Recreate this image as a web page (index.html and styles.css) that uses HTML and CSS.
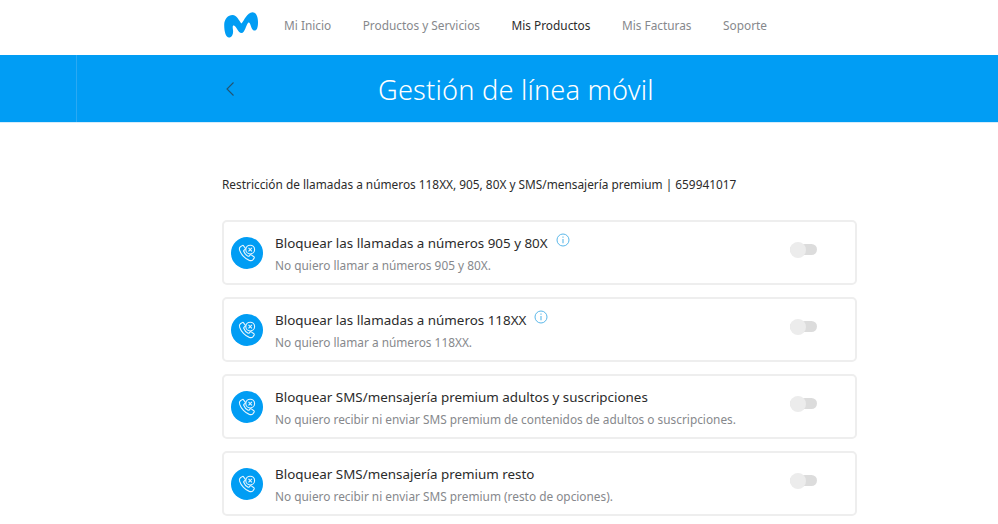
FILE: index.html
```html
<!DOCTYPE html>
<html lang="es">
<head>
<meta charset="utf-8">
<title>Gestión de línea móvil</title>
<link rel="stylesheet" href="styles.css">
</head>
<body>
<svg class="defs" width="0" height="0" aria-hidden="true">
  <symbol id="phone" viewBox="0 0 20 20">
    <path d="M5.200 2.600 3.400 3.700C2.300 4.500 2.200 5.900 2.700 7.400c1.200 3.900 5.700 8.900 9.600 10 1.600.5 3 .2 3.800-.8l1-1.500c.3-.5.2-1-.2-1.300l-2.600-1.900c-.4-.3-.9-.2-1.200.1l-.9 1c-.3.3-.7.4-1.100.2-1.800-.9-3.700-3-4.400-4.900-.1-.4 0-.8.3-1l1-.8c.4-.3.5-.8.3-1.200L6.600 2.900c-.3-.5-.9-.6-1.400-.3Z" fill="none" stroke="currentColor" stroke-width="1.100"/>
    <circle cx="13.200" cy="6.600" r="4.400" fill="none" stroke="currentColor" stroke-width="1.100"/>
    <path d="m11.500 4.900 3.400 3.400m0-3.400-3.400 3.400" fill="none" stroke="currentColor" stroke-width="1.100"/>
  </symbol>
  <symbol id="info" viewBox="0 0 14 14">
    <circle cx="7" cy="7" r="6" fill="none" stroke="currentColor" stroke-width="1"/>
    <path d="M7 6v4.200M7 3.600v1.200" fill="none" stroke="currentColor" stroke-width="1.100"/>
  </symbol>
</svg>
<header class="topbar">
  <svg class="logo" viewBox="0 0 36 26" aria-label="Movistar">
    <path d="M1.200 13C1.200 7 5 3 9.500 3C14 3 16 9 18.500 11.500C21 9 24 .3 29.500 .3C33 .3 35 5 35 10C35 14 34.500 18 32 18.500C29.500 19 28.500 16 27.500 13C27 11 26 10 25 11C23 13 22 21 18.500 21C15 21 14 15 11 13.500C9.500 13 9.500 15 10 18C10.500 22 9 25.500 6 25.500C3 25.500 1.200 20 1.200 13Z" fill="#019df4"/>
  </svg>
  <nav class="menu">
    <a class="menu-item">Mi Inicio</a>
    <a class="menu-item">Productos y Servicios</a>
    <a class="menu-item active">Mis Productos</a>
    <a class="menu-item">Mis Facturas</a>
    <a class="menu-item">Soporte</a>
  </nav>
</header>
<section class="banner">
  <div class="banner-side"></div>
  <svg class="back" viewBox="0 0 10 16" aria-label="Volver"><path d="M8.500 1.500 2 8l6.500 6.500" fill="none" stroke="#24536f" stroke-width="1.100"/></svg>
  <h1 class="title">Gestión de línea móvil</h1>
</section>
<main class="content">
  <p class="intro">Restricción de llamadas a números 118XX, 905, 80X y SMS/mensajería premium | 659941017</p>
  <ul class="cards">
    <li class="card">
      <span class="badge"><svg class="badge-icon"><use href="#phone"/></svg></span>
      <div class="card-text">
        <div class="card-title">Bloquear las llamadas a números 905 y 80X<svg class="info"><use href="#info"/></svg></div>
        <div class="card-sub">No quiero llamar a números 905 y 80X.</div>
      </div>
      <span class="toggle"></span>
    </li>
    <li class="card">
      <span class="badge"><svg class="badge-icon"><use href="#phone"/></svg></span>
      <div class="card-text">
        <div class="card-title">Bloquear las llamadas a números 118XX<svg class="info"><use href="#info"/></svg></div>
        <div class="card-sub">No quiero llamar a números 118XX.</div>
      </div>
      <span class="toggle"></span>
    </li>
    <li class="card">
      <span class="badge"><svg class="badge-icon"><use href="#phone"/></svg></span>
      <div class="card-text">
        <div class="card-title">Bloquear SMS/mensajería premium adultos y suscripciones</div>
        <div class="card-sub">No quiero recibir ni enviar SMS premium de contenidos de adultos o suscripciones.</div>
      </div>
      <span class="toggle"></span>
    </li>
    <li class="card">
      <span class="badge"><svg class="badge-icon"><use href="#phone"/></svg></span>
      <div class="card-text">
        <div class="card-title">Bloquear SMS/mensajería premium resto</div>
        <div class="card-sub">No quiero recibir ni enviar SMS premium (resto de opciones).</div>
      </div>
      <span class="toggle"></span>
    </li>
  </ul>
</main>
</body>
</html>
```
FILE: styles.css
```css
* { box-sizing: border-box; }
html, body { margin: 0; height: 524px; overflow: hidden; background: #fff; }
body { font-family: "Noto Sans", "Open Sans", sans-serif; color: #2b2b2b; }
.defs { display: block; height: 0; }

.topbar { height: 55px; display: flex; align-items: center; padding: 0 0 5px 223px; }
.logo { width: 36px; height: 26px; flex: none; }
.menu { display: flex; gap: 31.500px; margin-left: 25px; font-size: 11.85px; color: #86888c; }
.menu-item.active { color: #2b2b2b; }

.banner { height: 67px; background: #019df4; display: flex; align-items: center; position: relative; box-shadow: 0 1px 0 #d5ecfb; }
.banner-side { width: 77px; height: 100%; border-right: 1px solid #2aa9f3; flex: none; }
.back { width: 10px; height: 16px; margin-left: 148px; flex: none; }
.title { margin: 2px 0 0 143px; font-size: 27.2px; font-weight: 300; color: #fff; letter-spacing: .2px; white-space: nowrap; }

.content { margin-left: 222px; width: 635px; }
.intro { margin: 0; padding-top: 53px; font-size: 11.85px; line-height: 18px; color: #2b2b2b; }
.cards { list-style: none; margin: 27px 0 0; padding: 0; display: flex; flex-direction: column; gap: 12px; }
.card { height: 65px; border: 2px solid #eeeeee; border-radius: 5px; display: flex; align-items: center; padding: 0 38px 0 7px; }
.badge { width: 32px; height: 32px; border-radius: 50%; background: #019df4; color: #e6f5fe; display: flex; align-items: center; justify-content: center; flex: none; }
.badge-icon { width: 20px; height: 20px; }
.card-text { margin-left: 12px; padding-top: 1px; flex: 1; }
.card-title { font-size: 13.4px; line-height: 20px; color: #2b2b2b; display: flex; }
.card-sub { font-size: 11.85px; line-height: 18px; margin-top: 3px; color: #86888c; }
.info { width: 14px; height: 14px; margin: 0 0 0 8px; color: #5bb8ea; }
.toggle { width: 27px; height: 11px; border-radius: 6px; background: #dcdcdc; position: relative; margin-top: -6px; flex: none; }
.toggle::before { content: ""; position: absolute; left: 0; top: -2.500px; width: 16px; height: 16px; border-radius: 50%; background: #ececec; }
```
